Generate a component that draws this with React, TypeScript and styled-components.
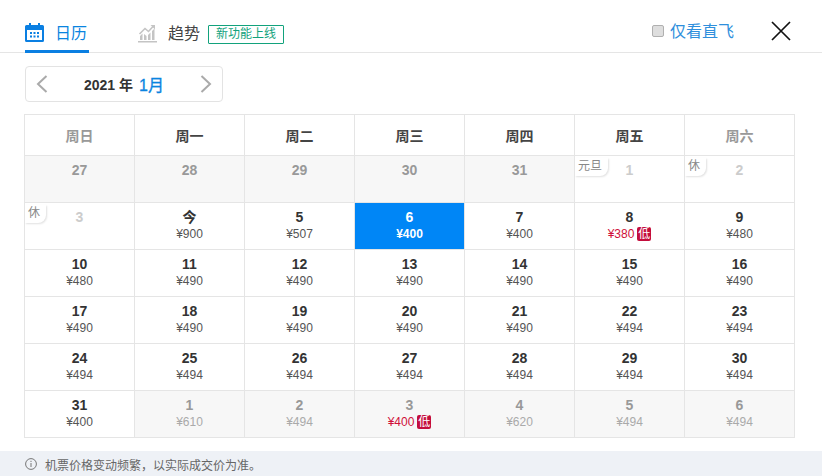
import styled, { createGlobalStyle } from "styled-components";

interface IDay {
  label: string;
  price?: string;
  kind?: "past" | "off" | "selected" | "next";
  tag?: string;
  low?: boolean;
}

const WEEK = [
  { name: "周日", weekend: true },
  { name: "周一", weekend: false },
  { name: "周二", weekend: false },
  { name: "周三", weekend: false },
  { name: "周四", weekend: false },
  { name: "周五", weekend: false },
  { name: "周六", weekend: true },
];

const DAYS: IDay[] = [
  { label: "27", kind: "past" },
  { label: "28", kind: "past" },
  { label: "29", kind: "past" },
  { label: "30", kind: "past" },
  { label: "31", kind: "past" },
  { label: "1", kind: "off", tag: "元旦" },
  { label: "2", kind: "off", tag: "休" },
  { label: "3", kind: "off", tag: "休" },
  { label: "今", price: "¥900" },
  { label: "5", price: "¥507" },
  { label: "6", price: "¥400", kind: "selected" },
  { label: "7", price: "¥400" },
  { label: "8", price: "¥380", low: true },
  { label: "9", price: "¥480" },
  { label: "10", price: "¥480" },
  { label: "11", price: "¥490" },
  { label: "12", price: "¥490" },
  { label: "13", price: "¥490" },
  { label: "14", price: "¥490" },
  { label: "15", price: "¥490" },
  { label: "16", price: "¥490" },
  { label: "17", price: "¥490" },
  { label: "18", price: "¥490" },
  { label: "19", price: "¥490" },
  { label: "20", price: "¥490" },
  { label: "21", price: "¥490" },
  { label: "22", price: "¥494" },
  { label: "23", price: "¥494" },
  { label: "24", price: "¥494" },
  { label: "25", price: "¥494" },
  { label: "26", price: "¥494" },
  { label: "27", price: "¥494" },
  { label: "28", price: "¥494" },
  { label: "29", price: "¥494" },
  { label: "30", price: "¥494" },
  { label: "31", price: "¥400" },
  { label: "1", price: "¥610", kind: "next" },
  { label: "2", price: "¥494", kind: "next" },
  { label: "3", price: "¥400", kind: "next", low: true },
  { label: "4", price: "¥620", kind: "next" },
  { label: "5", price: "¥494", kind: "next" },
  { label: "6", price: "¥494", kind: "next" },
];

const GlobalStyle = createGlobalStyle`
  body {
    margin: 0;
    background: #fff;
    font-family: "Liberation Sans", "Noto Sans CJK SC", sans-serif;
  }
`;

const Page = styled.div`
  width: 822px;
  height: 476px;
  display: flex;
  flex-direction: column;
  overflow: hidden;
`;

const Header = styled.div`
  height: 52px;
  flex: none;
  display: flex;
  align-items: flex-end;
  padding: 0 31px 0 25px;
  border-bottom: 1px solid #e5e5e5;
`;

const Tab = styled.div<{ active?: boolean }>`
  height: 33px;
  display: flex;
  align-items: flex-start;
  gap: 11px;
  padding-top: 3px;
  box-sizing: border-box;
  font-size: 16px;
  line-height: 22px;
  margin-bottom: -1px;
  color: ${(props) => (props.active ? "#0a84e0" : "#444")};
  border-bottom: 3px solid ${(props) => (props.active ? "#0a7fe2" : "transparent")};
  margin-right: ${(props) => (props.active ? "49px" : "0")};
  width: ${(props) => (props.active ? "64px" : "auto")};
  white-space: nowrap;
`;

const Badge = styled.span`
  height: 19px;
  width: 76px;
  margin: 2px 0 0 -3px;
  box-sizing: border-box;
  border: 1px solid #12a27c;
  border-radius: 1px;
  color: #12a27c;
  font-size: 12px;
  line-height: 17px;
  text-align: center;
`;

const Direct = styled.label`
  margin-left: auto;
  margin-bottom: 9px;
  display: flex;
  align-items: center;
  gap: 6px;
  font-size: 16px;
  line-height: 22px;
  color: #2f8fdc;
`;

const Check = styled.input`
  appearance: none;
  width: 12px;
  height: 12px;
  margin: 0 0 2px;
  background: #dedede;
  border: 1px solid #b0b0b0;
  border-radius: 2px;
`;

const CloseButton = styled.button`
  width: 20px;
  height: 20px;
  margin: 0 0 11px 37px;
  padding: 0;
  border: 0;
  background: none;
  color: #111;
  svg {
    display: block;
  }
`;

const MonthBar = styled.div`
  width: 198px;
  height: 36px;
  flex: none;
  box-sizing: border-box;
  margin: 13px 0 12px 25px;
  padding: 0 10px;
  display: flex;
  align-items: center;
  justify-content: space-between;
  border: 1px solid #e3e3e3;
  border-radius: 4px;
`;

const Arrow = styled.svg`
  display: block;
  color: #aaa;
`;

const MonthLabel = styled.div`
  display: flex;
  align-items: center;
  gap: 6px;
  font-size: 14px;
  font-weight: bold;
  color: #333;
`;

const MonthName = styled.span`
  font-size: 16px;
  font-weight: normal;
  -webkit-text-stroke: 0.3px #0a84e0;
  color: #0a84e0;
`;

const Calendar = styled.div`
  width: 771px;
  flex: none;
  box-sizing: border-box;
  margin-left: 24px;
  display: grid;
  grid-template-columns: repeat(7, 110px);
  grid-template-rows: 41px repeat(6, 47px);
  border-top: 1px solid #e5e5e5;
  border-left: 1px solid #e5e5e5;
`;

const WeekCell = styled.div<{ weekend: boolean }>`
  display: flex;
  align-items: center;
  justify-content: center;
  box-sizing: border-box;
  border-right: 1px solid #e5e5e5;
  border-bottom: 1px solid #e5e5e5;
  font-size: 14px;
  font-weight: bold;
  color: ${(props) => (props.weekend ? "#999" : "#444")};
`;

const dayBackground = (kind?: IDay["kind"]) => {
  if (kind === "selected") return "#0086f6";
  if (kind === "past" || kind === "next") return "#f7f7f7";
  return "#fff";
};

const DayCell = styled.div<{ kind?: IDay["kind"] }>`
  position: relative;
  box-sizing: border-box;
  padding-top: 6px;
  text-align: center;
  border-right: 1px solid #e5e5e5;
  border-bottom: 1px solid #e5e5e5;
  background: ${(props) => dayBackground(props.kind)};
`;

const dayColor = (kind?: IDay["kind"]) => {
  if (kind === "selected") return "#fff";
  if (kind === "past" || kind === "next") return "#999";
  if (kind === "off") return "#ccc";
  return "#333";
};

const DayNumber = styled.div<{ kind?: IDay["kind"] }>`
  height: 17px;
  font-size: 14px;
  line-height: 17px;
  font-weight: bold;
  color: ${(props) => dayColor(props.kind)};
`;

const priceColor = (kind?: IDay["kind"], low?: boolean) => {
  if (low) return "#d0103a";
  if (kind === "selected") return "#fff";
  if (kind === "next") return "#aaa";
  return "#555";
};

const Price = styled.div<{ kind?: IDay["kind"]; low?: boolean }>`
  height: 16px;
  display: flex;
  align-items: center;
  justify-content: center;
  gap: 3px;
  font-size: 12px;
  line-height: 16px;
  font-weight: ${(props) => (props.kind === "selected" ? "bold" : "normal")};
  color: ${(props) => priceColor(props.kind, props.low)};
  padding-left: ${(props) => (props.low ? "0" : "0")};
`;

const LowMark = styled.span`
  width: 14px;
  height: 14px;
  border-radius: 2px;
  background: #c30d3c;
  color: #fff;
  font-size: 12px;
  line-height: 14px;
`;

const Holiday = styled.span`
  position: absolute;
  top: 2px;
  left: 0;
  padding: 0 6px 0 3px;
  height: 18px;
  font-size: 12px;
  line-height: 17px;
  color: #888;
  background: #fff;
  border-radius: 0 0 8px 0;
  box-shadow: 1px 1px 2px rgba(0, 0, 0, 0.12);
`;

const Notice = styled.div`
  margin-top: 13px;
  height: 26px;
  flex: none;
  display: flex;
  align-items: center;
  gap: 8px;
  padding-left: 25px;
  background: #eef1f6;
  font-size: 12px;
  color: #666;
`;

function App() {
  return (
    <Page>
      <GlobalStyle />
      <Header>
        <Tab active>
          <svg width="19" height="20" viewBox="0 0 19 20" fill="#0a7fe2">
            <path d="M4 0h2v3H4zM13 0h2v3h-2z" />
            <path d="M0 3.500A1.500 1.500 0 0 1 1.500 2H17.500A1.500 1.500 0 0 1 19 3.500V17.500A1.500 1.500 0 0 1 17.500 19H1.500A1.500 1.500 0 0 1 0 17.500ZM2 7v10h15V7Z" fillRule="evenodd" />
            <path d="M5 9h2v2H5zM8.500 9h2v2h-2zM12 9h2v2h-2zM5 12.500h2v2H5zM8.500 12.500h2v2h-2zM12 12.500h2v2h-2z" />
          </svg>
          日历
        </Tab>
        <Tab>
          <svg width="19" height="20" viewBox="0 0 19 20" fill="#c4c4c4">
            <path d="M0 18h19v1.500H0zM2 13l2.500-2.500V17H2zM6 11l2.500 2v4H6zM10 12l2.500-2.500V17H10zM14 8l2.500-2.500V17H14z" />
            <path d="M1.500 11L7 5.500 10.500 8.500 15 3.500" fill="none" stroke="#c4c4c4" strokeWidth="1.600" />
            <path d="M12.500 2H17V6.500Z" />
          </svg>
          趋势
          <Badge>新功能上线</Badge>
        </Tab>
        <Direct>
          <Check type="checkbox" />
          仅看直飞
        </Direct>
        <CloseButton aria-label="关闭">
          <svg width="20" height="20" viewBox="0 0 20 20" stroke="currentColor" strokeWidth="1.700" fill="none">
            <path d="M1 1l18 18M19 1L1 19" />
          </svg>
        </CloseButton>
      </Header>
      <MonthBar>
        <Arrow width="12" height="18" viewBox="0 0 12 18" fill="none" stroke="currentColor" strokeWidth="2">
          <path d="M10.500 1L2 9l8.500 8" />
        </Arrow>
        <MonthLabel>
          2021 年 <MonthName>1月</MonthName>
        </MonthLabel>
        <Arrow width="12" height="18" viewBox="0 0 12 18" fill="none" stroke="currentColor" strokeWidth="2">
          <path d="M1.500 1L10 9l-8.500 8" />
        </Arrow>
      </MonthBar>
      <Calendar>
        {WEEK.map((day) => (
          <WeekCell key={day.name} weekend={day.weekend}>
            {day.name}
          </WeekCell>
        ))}
        {DAYS.map((day, idx) => (
          <DayCell key={idx} kind={day.kind}>
            {day.tag && <Holiday>{day.tag}</Holiday>}
            <DayNumber kind={day.kind}>{day.label}</DayNumber>
            {day.price && (
              <Price kind={day.kind} low={day.low}>
                {day.price}
                {day.low && <LowMark>低</LowMark>}
              </Price>
            )}
          </DayCell>
        ))}
      </Calendar>
      <Notice>
        <svg width="12" height="12" viewBox="0 0 12 12" fill="none" stroke="#777">
          <circle cx="6" cy="6" r="5.400" />
          <path d="M6 5v4M6 2.800v1.200" />
        </svg>
        机票价格变动频繁，以实际成交价为准。
      </Notice>
    </Page>
  );
}

export default App;
